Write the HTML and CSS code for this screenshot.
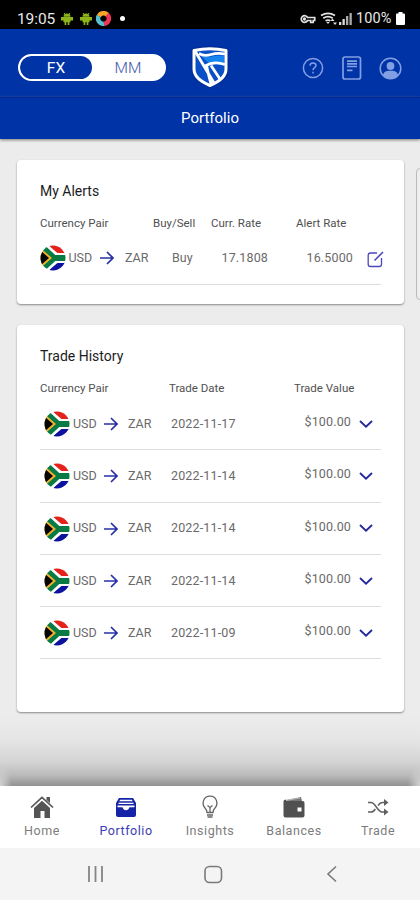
FILE: index.html
```
<!DOCTYPE html>
<html lang="en">
<head>
<meta charset="utf-8">
<title>Portfolio</title>
<link rel="stylesheet" href="styles.css">
</head>
<body>
<svg class="defs" width="0" height="0">
  <defs>
    <clipPath id="round"><circle cx="13" cy="13" r="12.500"/></clipPath>
    <symbol id="flag" viewBox="0 0 26 26">
      <g clip-path="url(#round)">
        <path fill="#fff" d="M0 0h26v26H0z"/>
        <path fill="#e3231b" d="M8 0h18v8.500h-8z"/>
        <path fill="#0c12a0" d="M8 26h18v-8.500h-8z"/>
        <path fill="none" stroke="#fff" stroke-width="10" d="M-2-3 14 13h13M-2 29 14 13"/>
        <path fill="none" stroke="#087a43" stroke-width="6" d="M-1-1 14 13h13M-1 27 14 13"/>
        <path fill="#f2b22c" d="M0 2.500 12 13 0 23.500z"/>
        <path fill="#050505" d="M0 5 9 13 0 21z"/>
      </g>
    </symbol>
    <symbol id="arrow" viewBox="0 0 14 14"><path d="M0 7h12.500M7 1l6 6-6 6"/></symbol>
    <symbol id="chevron" viewBox="0 0 14 8"><path d="m1 1 6 5.700L13 1"/></symbol>
    <symbol id="android" viewBox="0 0 12 13"><path d="M3 1l1.200 1.600M9 1 7.800 2.600" stroke="#8db51b"/><path fill="#8db51b" d="M2.500 4.800a3.500 3.300 0 0 1 7 0zM0 5h12v3.500H9.500v1.800H8.400V13H6.700v-2.700H5.300V13H3.600v-2.700H2.500V8.500H0z"/></symbol>
  </defs>
</svg>

<div class="status">
  <span class="clock">19:05</span>
  <svg class="droid" width="12" height="13"><use href="#android"/></svg>
  <svg class="droid" width="12" height="13"><use href="#android"/></svg>
  <svg class="swirl" width="15" height="15" viewBox="0 0 15 15" fill="none" stroke-width="4.500"><path stroke="#f5a52b" d="M2.800 5.200A5.200 5.200 0 0 1 11.500 4"/><path stroke="#ef3654" d="M11 3.500a5.200 5.200 0 0 1-3 9.200"/><path stroke="#56bfd2" d="M8 12.700A5.200 5.200 0 0 1 2.700 5"/></svg>
  <i class="dot"></i>
  <svg class="key" width="16" height="10" viewBox="0 0 16 10" fill="none" stroke="#e4e4e4" stroke-width="1.700"><path d="M7.500 3.500h7.200v3h-1.500v2h-2.500v-2H7.500A3.300 3.300 0 1 1 7.500 3.500z"/><circle cx="4.500" cy="5" r=".8"/></svg>
  <svg class="wifi" width="18" height="15" viewBox="0 0 18 15" fill="none" stroke="#e4e4e4" stroke-width="1.700"><path d="M1 4.500Q8 .2 15 4.500M3.300 7.200q4.700-3 9.400 0M5.600 9.800q2.400-1.500 4.800 0"/><path fill="#e4e4e4" stroke="none" d="m6.300 11 1.700 2 1.700-2zM10.500 10l2-2.500 2 2.500zM13 11.500h4L15 14z"/></svg>
  <svg class="signal" width="13" height="13" viewBox="0 0 13 13"><path fill="#ddd" d="M0 10h2.300v3H0zM3.500 7h2.300v6H3.500z"/><path fill="#aaa" d="M7 4h2.300v9H7zM10.500 1h2.300v12h-2.300z"/></svg>
  <span class="percent">100%</span>
  <svg width="9" height="13" viewBox="0 0 9 13"><path fill="#fff" d="M2.500 0h4v1.500H8q1 0 1 1V12q0 1-1 1H1q-1 0-1-1V2.500q0-1 1-1h1.500z"/></svg>
</div>

<header class="top">
  <div class="toggle"><span class="on">FX</span><span class="off">MM</span></div>
  <svg class="logo" width="38" height="42" viewBox="0 0 38 42">
    <path fill="#0a4fc6" stroke="#fff" stroke-width="3" stroke-linejoin="round" d="M3 4.500Q19 1 35 4.500V23q0 10-16 16.500Q3 33 3 23z"/>
    <path fill="#1684ee" d="M9 9q6 3 12 1.500t12-1v8q-7-2-14 1z"/>
    <g fill="none" stroke="#fff" stroke-width="2.800"><path d="M4 5 23 37M8 7.500q5 3 12 1t14-.5M14 20q9-5.500 20-1.500M15.500 19q1.500 8 4.500 19M20 19.500 29 33"/></g>
  </svg>
  <div class="tools">
    <svg width="22" height="22" viewBox="0 0 22 22" fill="none" stroke="#829fe4" stroke-width="1.500"><circle cx="11" cy="11" r="9.600"/><path d="M8 8.700Q8.100 6 11 6t3 2.500c0 2-3 2.200-3 4.700" /><path d="M11 14.700v1.700"/></svg>
    <svg width="20" height="24" viewBox="0 0 20 24" fill="none" stroke="#829fe4" stroke-width="1.700"><rect x="1" y="1" width="17.500" height="22" rx="2"/><path d="M5 5.200h10M5 7.800h10M5 10.500h10M5 14.300h5.500"/></svg>
    <svg width="23" height="23" viewBox="0 0 23 23"><circle cx="11.500" cy="11.500" r="10.300" fill="none" stroke="#829fe4" stroke-width="1.500"/><circle cx="11.500" cy="9" r="3.900" fill="#829fe4"/><path fill="#829fe4" d="M4 18q1-3.700 5-4.200h5q4 .5 5 4.200-7.500 7.500-15 0z"/></svg>
  </div>
</header>
<h1 class="title">Portfolio</h1>

<main class="content">
  <div class="peek"></div>
  <section class="card alerts">
    <h2>My Alerts</h2>
    <div class="head"><span>Currency Pair</span><span>Buy/Sell</span><span>Curr. Rate</span><span>Alert Rate</span></div>
    <div class="row">
      <svg class="flag"><use href="#flag"/></svg><span>USD</span><svg class="arrow"><use href="#arrow"/></svg><span>ZAR</span><span>Buy</span><span class="num">17.1808</span><span class="num">16.5000</span>
      <svg class="edit" width="17" height="17" viewBox="0 0 17 17" fill="none" stroke="#4a48bd" stroke-width="1.300"><path d="M10 2H3.500Q1.200 2 1.200 4.300v8.900q0 2.300 2.300 2.300h8.700q2.300 0 2.300-2.300V7"/><path stroke-width="1.600" d="M7.500 9.500 16 1"/></svg>
    </div>
  </section>

  <section class="card history">
    <h2>Trade History</h2>
    <div class="head"><span>Currency Pair</span><span>Trade Date</span><span>Trade Value</span></div>
    <div class="row"><svg class="flag"><use href="#flag"/></svg><span>USD</span><svg class="arrow"><use href="#arrow"/></svg><span>ZAR</span><span class="num">2022-11-17</span><span class="value">$100.00</span><svg class="chevron"><use href="#chevron"/></svg></div>
    <div class="row"><svg class="flag"><use href="#flag"/></svg><span>USD</span><svg class="arrow"><use href="#arrow"/></svg><span>ZAR</span><span class="num">2022-11-14</span><span class="value">$100.00</span><svg class="chevron"><use href="#chevron"/></svg></div>
    <div class="row"><svg class="flag"><use href="#flag"/></svg><span>USD</span><svg class="arrow"><use href="#arrow"/></svg><span>ZAR</span><span class="num">2022-11-14</span><span class="value">$100.00</span><svg class="chevron"><use href="#chevron"/></svg></div>
    <div class="row"><svg class="flag"><use href="#flag"/></svg><span>USD</span><svg class="arrow"><use href="#arrow"/></svg><span>ZAR</span><span class="num">2022-11-14</span><span class="value">$100.00</span><svg class="chevron"><use href="#chevron"/></svg></div>
    <div class="row"><svg class="flag"><use href="#flag"/></svg><span>USD</span><svg class="arrow"><use href="#arrow"/></svg><span>ZAR</span><span class="num">2022-11-09</span><span class="value">$100.00</span><svg class="chevron"><use href="#chevron"/></svg></div>
  </section>
</main>

<nav class="tabs">
  <a><svg width="24" height="24" viewBox="0 0 24 24"><path fill="#555" d="M4 13 12 5.800l8 7.200v10h-5.500v-7h-4v7H4z"/><path fill="none" stroke="#555" stroke-width="1.700" d="M1 12.500 12 2.300l11 10.200"/><path fill="#555" d="M16.500 2H20v6l-3.500-3z"/></svg>Home</a>
  <a class="active"><svg width="24" height="24" viewBox="0 0 24 24"><path fill="#1723a7" d="M5 3h14l3 5v12q0 2-2 2H4q-2 0-2-2V8z"/><path fill="#fff" d="M6.200 4.800h11.600l1 1.500H5.200zM4.500 7.800h15V9h-15zM3.500 10.500h17v1.700h-5q-1 3-3.500 3t-3.500-3h-5z"/></svg>Portfolio</a>
  <a><svg width="24" height="24" viewBox="0 0 24 24" fill="none" stroke="#666" stroke-width="1.300"><path d="M9 17.500q0-2.500-2-4.500C3.500 9 5 1.200 12 1.200S20.500 9 17 13q-2 2-2 4.500zM9 20h6M9.500 22h5M12 17v-5M9.500 10.500l2.500 2 2.500-2"/></svg>Insights</a>
  <a><svg width="24" height="24" viewBox="0 0 24 24"><path fill="#777" d="m4 5 15-3 1 4H4z"/><path fill="#505050" d="M1.500 6Q2 4.500 4 4.500V6h16.500q2 0 2 2v12.500q0 2-2 2h-17q-2 0-2-2z"/><path fill="#fff" d="M15.500 12.500h4v4h-4z"/><path fill="none" stroke="#ccc" stroke-width=".8" d="M4 5.500 18 3"/></svg>Balances</a>
  <a><svg width="24" height="24" viewBox="0 0 24 24"><g fill="none" stroke="#606060" stroke-width="1.500"><path d="M2 7.500h3c4.500 0 6.500 9.500 11 9.500h4M2 17h3q2.500 0 4.300-3M12 10.500q2-3 4.500-3H20"/></g><path fill="#606060" d="m18 4 4.500 3.500L18 11zM18 13.500l4.500 3.500-4.500 3.500z"/></svg>Trade</a>
</nav>
<div class="system">
  <svg width="18" height="18" viewBox="0 0 18 18" stroke="#858585" stroke-width="1.800"><path d="M2 1v16M8.500 1v16M15 1v16"/></svg>
  <svg width="19" height="19" viewBox="0 0 19 19" fill="none" stroke="#7a7a7a" stroke-width="1.600"><rect x="1" y="1.500" width="16.500" height="16" rx="4.500"/></svg>
  <svg width="12" height="18" viewBox="0 0 12 18" fill="none" stroke="#7a7a7a" stroke-width="1.600"><path d="M10 1.500 2 9l8 7.500"/></svg>
</div>
</body>
</html>
```
FILE: styles.css
```
* { box-sizing: border-box; }
body { margin: 0; width: 420px; height: 900px; overflow: hidden; display: flex; flex-direction: column; background: #ececec; font-family: Roboto, "Liberation Sans", sans-serif; }
svg { display: block; flex: none; }
.defs { position: absolute; }
h1, h2 { margin: 0; font-weight: 400; }

.status { height: 29px; flex: none; background: #000; color: #e8e8e8; display: flex; align-items: center; padding: 8px 15px 0 17px; font-size: 14.500px; }
.clock { width: 44px; font-size: 15.500px; letter-spacing: -.1px; }
.droid { margin-right: 6.500px; }
.swirl { margin-left: -2px; }
.dot { width: 5px; height: 5px; border-radius: 50%; background: #fff; margin-left: 9px; }
.key { margin-left: auto; }
.wifi { margin-left: 4px; }
.signal { margin-left: 1px; }
.percent { margin: 0 1px 0 4px; letter-spacing: .1px; width: 39px; }

.top { height: 68px; flex: none; background: #0033a6; display: grid; grid-template-columns: 173px 75px 1fr; padding: 9px 17px 0 18px; align-items: center; }
.toggle { width: 148px; height: 27px; border: 2px solid #fff; border-radius: 14px; background: #fff; display: flex; overflow: hidden; font-size: 15.500px; text-align: center; line-height: 24px; }
.on { width: 72px; background: #0033a6; color: #fff; border-radius: 12px; }
.off { flex: 1; color: #4054ae; font-weight: 300; }
.logo { margin-top: -1px; filter: drop-shadow(0 0 1px #001e78); }
.tools { display: flex; justify-content: space-between; align-items: center; padding: 1px 1px 0 36px; }
.title { height: 42px; flex: none; background: #0033a6; border-top: 1px solid #08278f; color: #fff; font-size: 15px; text-align: center; line-height: 41px; box-shadow: 0 1px 3px #777; z-index: 1; }

.content { flex: 1; position: relative; padding: 21px 16px 0 17px; background: radial-gradient(ellipse 12px 24px at 0 647px, #d4d4d4, transparent), radial-gradient(ellipse 12px 24px at 420px 647px, #d4d4d4, transparent), linear-gradient(#ececec 575px, #e6e6e6 600px, #d4d4d4 623px, #bbb 636px, #929292 647px); }
.peek { position: absolute; left: 416px; top: 29px; width: 12px; height: 132px; border: 1px solid #bbb; border-radius: 4px; background: #eee; }
.card { background: #fff; border-radius: 4px; box-shadow: 0 1px 2px #888; padding: 0 23px; }
.card h2 { color: #1c1c1c; font-size: 14px; line-height: 18px; padding-top: 22px; letter-spacing: 0; }
.head { display: grid; color: #505050; font-size: 11.500px; line-height: 14px; white-space: nowrap; }
.row { display: grid; align-items: center; color: #6a6a6a; font-size: 12.500px; border-bottom: 1px solid #dedede; }
.row span { line-height: 16px; }
.num, .value { letter-spacing: .15px; }
.flag { width: 26px; height: 26px; }
.arrow { width: 14px; height: 14px; fill: none; stroke: #2630a8; stroke-width: 1.700; }
.chevron { width: 14px; height: 8px; fill: none; stroke: #2227a0; stroke-width: 1.800; }

.alerts { height: 144px; }
.alerts .head { grid-template-columns: 113px 58px 85px 1fr; margin-top: 16px; }
.alerts .row { grid-template-columns: 28.500px 31.500px 25px 47px 49.500px 85px 60px 17px; height: 55px; padding-top: 2px; }
.alerts .row span { margin-top: -1px; }
.alerts .edit { margin-top: 3px; }
.history { height: 387px; margin-top: 21px; }
.history .head { grid-template-columns: 129px 125px 1fr; margin-top: 16px; margin-bottom: 3px; }
.history .row { grid-template-columns: 29px 31px 24px 43px 133.500px 54px 14px; height: 52.300px; padding-left: 4px; padding-top: 1px; }
.history .row span { margin-top: -1px; }
.history .row .value { margin-top: -4px; }
.history .chevron { margin-top: -1px; }

.tabs { height: 62px; flex: none; background: #fff; display: grid; grid-template-columns: repeat(5, 84px); color: #7c7c7c; font-size: 12.500px; letter-spacing: .55px; }
.tabs a { display: flex; flex-direction: column; align-items: center; padding-top: 9px; line-height: 15px; gap: 4px; }
.tabs .active { color: #3940b5; }
.system { height: 52px; flex: none; background: #f4f4f4; display: grid; grid-template-columns: 117px 122px 12px; padding-left: 87px; align-items: center; }
```
